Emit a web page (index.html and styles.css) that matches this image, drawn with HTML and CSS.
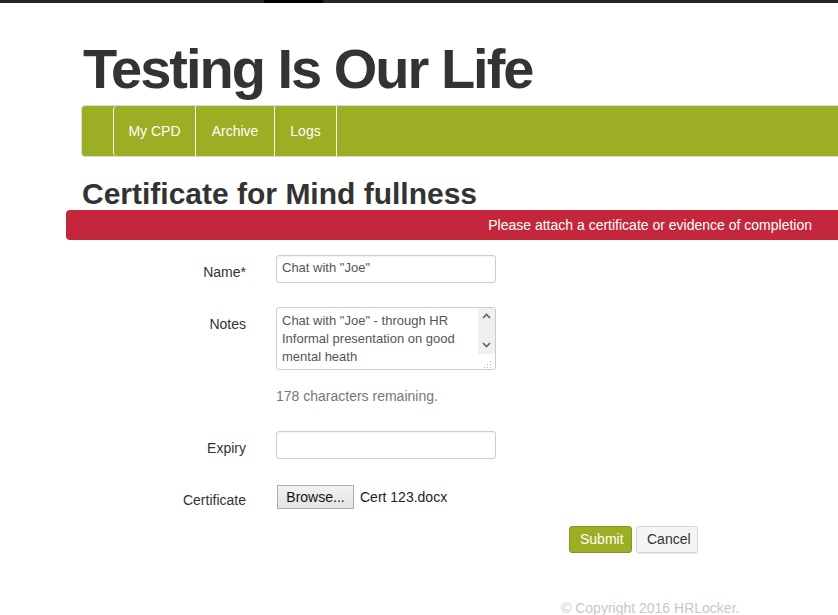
FILE: index.html
```html
<!DOCTYPE html>
<html>
<head>
<meta charset="utf-8">
<link rel="stylesheet" href="styles.css">
</head>
<body>
<div class="topbar"><span class="seg a"></span><span class="seg b"></span><span class="seg c"></span></div>
<div class="page">
  <h1 class="site-title">Testing Is Our Life</h1>
  <nav class="navbar">
    <div class="brand"></div>
    <ul class="nav">
      <li class="i1"><a href="#">My CPD</a></li>
      <li class="i2"><a href="#">Archive</a></li>
      <li class="i3"><a href="#">Logs</a></li>
    </ul>
  </nav>
  <h2 class="page-title">Certificate for Mind fullness</h2>
  <div class="alert">Please attach a certificate or evidence of completion</div>
  <form class="form">
    <div class="row row-name">
      <label class="lbl">Name*</label>
      <input class="field" type="text" value="Chat with &quot;Joe&quot;">
    </div>
    <div class="row row-notes">
      <label class="lbl">Notes</label>
      <div class="tabox">
        <div class="tatext">Chat with "Joe" - through HR<br>Informal presentation on good<br>mental heath</div>
        <div class="sbar">
          <div class="track">
            <svg width="9" height="6" viewBox="0 0 9 6"><path d="M1 5 L4.5 1.5 L8 5" fill="none" stroke="#606060" stroke-width="1.6"/></svg>
            <svg width="9" height="6" viewBox="0 0 9 6"><path d="M1 1 L4.5 4.5 L8 1" fill="none" stroke="#606060" stroke-width="1.6"/></svg>
          </div>
          <svg class="grip" width="8" height="8" viewBox="0 0 8 8" fill="#b0b0b0"><rect x="6" y="0" width="1" height="1"/><rect x="3" y="3" width="1" height="1"/><rect x="6" y="3" width="1" height="1"/><rect x="0" y="6" width="1" height="1"/><rect x="3" y="6" width="1" height="1"/><rect x="6" y="6" width="1" height="1"/></svg>
        </div>
      </div>
    </div>
    <div class="row row-hint">
      <span></span>
      <p class="hint">178 characters remaining.</p>
    </div>
    <div class="row row-expiry">
      <label class="lbl">Expiry</label>
      <input class="field" type="text" value="">
    </div>
    <div class="row row-cert">
      <label class="lbl">Certificate</label>
      <div class="file"><span class="browse">Browse...</span><span class="fname">Cert 123.docx</span></div>
    </div>
    <div class="actions">
      <button type="button" class="btn btn-primary">Submit</button>
      <button type="button" class="btn btn-default">Cancel</button>
    </div>
  </form>
  <footer class="footer">© Copyright 2016 HRLocker.</footer>
</div>
</body>
</html>
```

FILE: styles.css
```css
html, body {
  margin: 0;
  padding: 0;
  overflow: hidden;
  background: #fff;
}
body {
  font-family: "Liberation Sans", Arial, sans-serif;
  font-size: 14px;
  line-height: 20px;
  color: #333;
  width: 838px;
  height: 615px;
}
.topbar {
  display: flex;
  height: 3px;
}
.seg { display: block; height: 3px; }
.seg.a { width: 264px; background: #262626; }
.seg.b { width: 59px; background: #000; }
.seg.c { flex: 1; background: #262626; }

.page {
  padding-left: 81px;
  overflow: hidden;
}
.site-title {
  margin: 0;
  padding: 35px 0 0 2px;
  font-size: 56px;
  line-height: 62px;
  font-weight: bold;
  letter-spacing: -2px;
  color: #333;
}
.navbar {
  display: flex;
  margin-top: 5px;
  height: 50px;
  width: 800px;
  background: #9cae24;
  border: 1px solid #dcdcdc;
  border-radius: 4px;
}
.brand { width: 31px; }
.nav {
  display: flex;
  margin: 0;
  padding: 0;
  list-style: none;
  border-left: 1px solid #f2f2f2;
  border-top-left-radius: 4px;
  border-bottom-left-radius: 4px;
}
.nav li {
  display: flex;
  justify-content: center;
  border-right: 1px solid #f2f2f2;
}
.nav .i1 { width: 81px; }
.nav .i2 { width: 78px; }
.nav .i3 { width: 61px; }
.nav a {
  display: block;
  padding: 15px 0;
  color: #fff;
  text-decoration: none;
  font-size: 14px;
  line-height: 20px;
}
.page-title {
  margin: 20px 0 0 1px;
  font-size: 30px;
  line-height: 33px;
  font-weight: bold;
  color: #333;
}
.alert {
  margin: 0 0 0 -15px;
  height: 30px;
  line-height: 30px;
  background: #c4273c;
  color: #fff;
  text-align: right;
  padding-right: 26px;
  border-radius: 4px 0 0 4px;
  font-size: 14px;
}
.form {
  display: flex;
  flex-direction: column;
  margin-top: 15px;
}
.row {
  display: grid;
  grid-template-columns: 165px 220px;
  column-gap: 30px;
  align-items: start;
}
.lbl {
  text-align: right;
  padding-top: 7px;
  color: #333;
}
.field {
  box-sizing: border-box;
  width: 220px;
  height: 28px;
  margin: 0;
  padding: 0 5px 3px;
  border: 1px solid #ccc;
  border-radius: 3px;
  box-shadow: inset 0 1px 1px rgba(0,0,0,0.05);
  font-family: "Liberation Sans", Arial, sans-serif;
  font-size: 13px;
  color: #555;
}
.row-notes { margin-top: 24px; }
.tabox {
  box-sizing: border-box;
  width: 220px;
  height: 63px;
  border: 1px solid #ccc;
  border-radius: 3px;
  display: flex;
  overflow: hidden;
}
.tatext {
  flex: 1;
  padding: 4px 0 0 5px;
  font-size: 13px;
  line-height: 18px;
  color: #555;
  white-space: nowrap;
}
.sbar {
  width: 17px;
  display: flex;
  flex-direction: column;
}
.track {
  height: 46px;
  background: #f0f0f0;
  display: flex;
  flex-direction: column;
  align-items: center;
  justify-content: space-between;
  padding: 5px 0 6px;
  box-sizing: border-box;
}
.grip {
  margin: 7px 0 0 6px;
}
.row-hint { margin-top: 16px; }
.hint {
  margin: 0;
  color: #777;
}
.row-expiry { margin-top: 25px; }
.row-cert { margin-top: 24px; }
.file {
  display: flex;
  align-items: center;
  height: 28px;
}
.browse {
  box-sizing: border-box;
  height: 24px;
  width: 77px;
  margin-left: 1px;
  border: 1px solid #adadad;
  background: linear-gradient(#f2f2f2, #e3e3e3);
  color: #111;
  text-align: center;
  line-height: 22px;
  font-size: 14px;
}
.fname {
  margin-left: 6px;
  color: #222;
}
.actions {
  display: flex;
  gap: 4px;
  margin-top: 15px;
  margin-left: 488px;
}
.btn {
  box-sizing: border-box;
  height: 27px;
  padding: 0 10px;
  border-radius: 3px;
  font-family: "Liberation Sans", Arial, sans-serif;
  font-size: 14px;
  line-height: 25px;
  cursor: pointer;
}
.btn-primary {
  width: 63px;
  background: #9cae24;
  border: 1px solid #86961c;
  color: #fff;
}
.btn-default {
  width: 62px;
  background: #f5f5f5;
  border: 1px solid #d5d5d5;
  color: #333;
  box-shadow: 0 1px 1px rgba(0,0,0,0.08);
}
.footer {
  margin-top: 45px;
  margin-left: 480px;
  color: #c8c8c8;
  font-size: 14px;
  white-space: nowrap;
}
```
